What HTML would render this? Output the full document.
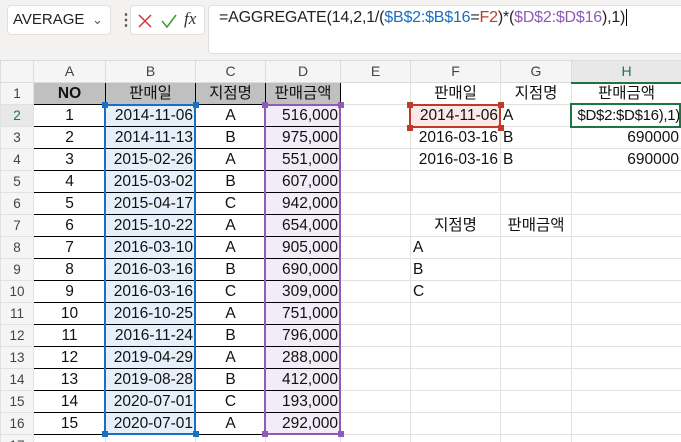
<!DOCTYPE html><html><head><meta charset="utf-8"><style>
*{box-sizing:border-box;margin:0;padding:0}
html,body{width:681px;height:442px;overflow:hidden}
body{background:#fff;font-family:"Liberation Sans","Noto Sans CJK KR",sans-serif;position:relative}
.top{position:absolute;left:0;top:0;width:681px;height:60px;background:#f3f2f1}
.nb{position:absolute;left:7px;top:5px;width:104px;height:30px;background:#fff;border:1px solid #e1dfdd;border-radius:4px;font-size:15px;line-height:28px;padding-left:5px;color:#222}
.fx{position:absolute;top:5px;height:30px;background:#fff;border:1px solid #e1dfdd;border-radius:4px}
.fb{position:absolute;left:208px;top:5px;width:480px;height:49px;background:#fff;border:1px solid #e1dfdd;border-radius:4px;font-size:16px;padding:3px 0 0 10px;color:#222;letter-spacing:-0.2px}
table{position:absolute;left:0;top:60px;width:681px;border-collapse:collapse;table-layout:fixed}
tr{height:22px}
td{height:22px;line-height:19px;border:1px solid #e1e1e1;font-size:15.5px;white-space:nowrap;overflow:hidden;color:#111;padding:0 2px}
td.h{background:#f5f5f5;color:#444;text-align:center;font-size:13.5px}
tr.ch td{background:#f5f5f5;color:#444;text-align:center;font-size:14px;border-color:#dcdcdc}
.c{text-align:center}.r{text-align:right}
.g{background:#c0c0c0!important;border:1px solid #000!important;text-align:center}
.t{border:1px solid #000!important}
.bf{background:#e6f0fa}.df{background:#f1ecf7}
.box{position:absolute;border:2px solid}
.sq{position:absolute;width:6px;height:6px}
</style></head><body>
<div class="top"></div>
<div class="nb">AVERAGE <span style="position:absolute;left:84px;color:#555;font-size:13px">&#8964;</span></div>
<div style="position:absolute;left:118px;top:10px;font-size:16px;color:#555;font-weight:bold">&#8942;</div>
<div class="fx" style="left:130px;width:75px">
<svg width="75" height="30" style="position:absolute;left:0;top:0"><path d="M8 9 L20 21 M20 9 L8 21" stroke="#d13438" stroke-width="1.5" fill="none"/><path d="M31 15 L36 21 L45 9" stroke="#3a9a3a" stroke-width="1.5" fill="none"/></svg>
<span style="position:absolute;left:53px;top:3px;font-family:'Liberation Serif',serif;font-style:italic;font-size:17px;color:#333">fx</span></div>
<div class="fb">=AGGREGATE(14,2,1/(<span style="color:#1a6fc0">$B$2:$B$16</span>=<span style="color:#c0392b">F2</span>)*(<span style="color:#8e5bb5">$D$2:$D$16</span>),1)<span style="border-left:1px solid #000;margin-left:1px"></span></div>
<table>
<colgroup><col style="width:33px"><col style="width:72px"><col style="width:90px"><col style="width:70px"><col style="width:75px"><col style="width:70px"><col style="width:90px"><col style="width:71px"><col style="width:110px"></colgroup>
<tr class="ch"><td></td><td>A</td><td>B</td><td>C</td><td>D</td><td>E</td><td>F</td><td>G</td><td style="background:#e8e8e8;border-bottom:2px solid #217346;color:#217346">H</td></tr>
<tr><td class="h">1</td><td class="g"><b>NO</b></td><td class="g">판매일</td><td class="g">지점명</td><td class="g">판매금액</td><td></td><td class="c">판매일</td><td class="c">지점명</td><td class="c">판매금액</td></tr>
<tr><td class="h" style="color:#217346;background:#e8e8e8">2</td><td class="t c">1</td><td class="t r bf">2014-11-06</td><td class="t c">A</td><td class="t r df">516,000</td><td></td><td class="r" style="background:#fbe9e9">2014-11-06</td><td>A</td><td class="r" style="padding:0 1px 0 0;font-size:15px;letter-spacing:-0.3px">$D$2:$D$16),1)</td></tr>
<tr><td class="h">3</td><td class="t c">2</td><td class="t r bf">2014-11-13</td><td class="t c">B</td><td class="t r df">975,000</td><td></td><td class="r">2016-03-16</td><td>B</td><td class="r">690000</td></tr>
<tr><td class="h">4</td><td class="t c">3</td><td class="t r bf">2015-02-26</td><td class="t c">A</td><td class="t r df">551,000</td><td></td><td class="r">2016-03-16</td><td>B</td><td class="r">690000</td></tr>
<tr><td class="h">5</td><td class="t c">4</td><td class="t r bf">2015-03-02</td><td class="t c">B</td><td class="t r df">607,000</td><td></td><td></td><td></td><td></td></tr>
<tr><td class="h">6</td><td class="t c">5</td><td class="t r bf">2015-04-17</td><td class="t c">C</td><td class="t r df">942,000</td><td></td><td></td><td></td><td></td></tr>
<tr><td class="h">7</td><td class="t c">6</td><td class="t r bf">2015-10-22</td><td class="t c">A</td><td class="t r df">654,000</td><td></td><td class="c">지점명</td><td class="c">판매금액</td><td></td></tr>
<tr><td class="h">8</td><td class="t c">7</td><td class="t r bf">2016-03-10</td><td class="t c">A</td><td class="t r df">905,000</td><td></td><td>A</td><td></td><td></td></tr>
<tr><td class="h">9</td><td class="t c">8</td><td class="t r bf">2016-03-16</td><td class="t c">B</td><td class="t r df">690,000</td><td></td><td>B</td><td></td><td></td></tr>
<tr><td class="h">10</td><td class="t c">9</td><td class="t r bf">2016-03-16</td><td class="t c">C</td><td class="t r df">309,000</td><td></td><td>C</td><td></td><td></td></tr>
<tr><td class="h">11</td><td class="t c">10</td><td class="t r bf">2016-10-25</td><td class="t c">A</td><td class="t r df">751,000</td><td></td><td></td><td></td><td></td></tr>
<tr><td class="h">12</td><td class="t c">11</td><td class="t r bf">2016-11-24</td><td class="t c">B</td><td class="t r df">796,000</td><td></td><td></td><td></td><td></td></tr>
<tr><td class="h">13</td><td class="t c">12</td><td class="t r bf">2019-04-29</td><td class="t c">A</td><td class="t r df">288,000</td><td></td><td></td><td></td><td></td></tr>
<tr><td class="h">14</td><td class="t c">13</td><td class="t r bf">2019-08-28</td><td class="t c">B</td><td class="t r df">412,000</td><td></td><td></td><td></td><td></td></tr>
<tr><td class="h">15</td><td class="t c">14</td><td class="t r bf">2020-07-01</td><td class="t c">C</td><td class="t r df">193,000</td><td></td><td></td><td></td><td></td></tr>
<tr><td class="h">16</td><td class="t c">15</td><td class="t r bf">2020-07-01</td><td class="t c">A</td><td class="t r df">292,000</td><td></td><td></td><td></td><td></td></tr>
<tr><td class="h">17</td><td></td><td></td><td></td><td></td><td></td><td></td><td></td><td></td></tr>
</table>
<div class="box" style="left:104px;top:104px;width:92px;height:331px;border-color:#1a6fc0"></div>
<div class="sq" style="left:102px;top:102px;background:#1a6fc0"></div><div class="sq" style="left:193px;top:102px;background:#1a6fc0"></div><div class="sq" style="left:102px;top:431px;background:#1a6fc0"></div><div class="sq" style="left:193px;top:431px;background:#1a6fc0"></div>
<div class="box" style="left:264px;top:104px;width:77px;height:331px;border-color:#8e5bb5"></div>
<div class="sq" style="left:262px;top:102px;background:#8e5bb5"></div><div class="sq" style="left:338px;top:102px;background:#8e5bb5"></div><div class="sq" style="left:262px;top:431px;background:#8e5bb5"></div><div class="sq" style="left:338px;top:431px;background:#8e5bb5"></div>
<div class="box" style="left:409px;top:104px;width:92px;height:24px;border-color:#c0392b"></div>
<div class="sq" style="left:407px;top:102px;background:#c0392b"></div><div class="sq" style="left:498px;top:102px;background:#c0392b"></div><div class="sq" style="left:407px;top:125px;background:#c0392b"></div><div class="sq" style="left:498px;top:125px;background:#c0392b"></div>
<div class="box" style="left:570px;top:103px;width:111px;height:25px;border-color:#217346"></div>
</body></html>
